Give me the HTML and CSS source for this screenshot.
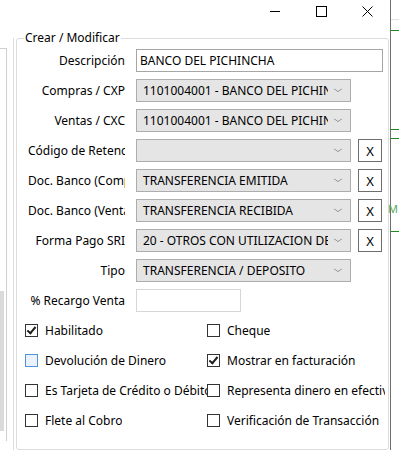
FILE: index.html
```html
<!DOCTYPE html>
<html lang="es">
<head>
    <meta charset="UTF-8">
    <meta name="viewport" content="width=device-width, initial-scale=1.0">
    <title>Crear / Modificar</title>
    <link rel="stylesheet" href="styles.css">
</head>
<body>
    <div class="screen">
        <div class="win">
            <div class="titlebar">
                <span class="tb-btn">
                    <svg width="10" height="10" viewBox="0 0 10 10"><path d="M0 5.5H10" stroke="#000" stroke-width="1"/></svg>
                </span>
                <span class="tb-btn">
                    <svg width="11" height="11" viewBox="0 0 11 11"><rect x="0.5" y="0.5" width="10" height="10" fill="none" stroke="#000" stroke-width="1"/></svg>
                </span>
                <span class="tb-btn">
                    <svg width="11" height="11" viewBox="0 0 11 11"><path d="M0.5 0.5L10.5 10.5M10.5 0.5L0.5 10.5" stroke="#000" stroke-width="1"/></svg>
                </span>
            </div>

            <div class="body">
                <div class="side">
                    <div class="side-box">
                        <div class="side-scroll"></div>
                    </div>
                </div>

                <fieldset class="group">
                    <legend>Crear / Modificar</legend>

                    <!-- campos -->
                    <div class="form">
                        <div class="row">
                            <label class="lbl">Descripción</label>
                            <div class="textbox wide">BANCO DEL PICHINCHA</div>
                        </div>
                        <div class="row">
                            <label class="lbl">Compras / CXP</label>
                            <div class="combo"><span class="combo-text">1101004001 - BANCO DEL PICHINCHA</span><span class="chev"></span></div>
                        </div>
                        <div class="row">
                            <label class="lbl">Ventas / CXC</label>
                            <div class="combo"><span class="combo-text">1101004001 - BANCO DEL PICHINCHA</span><span class="chev"></span></div>
                        </div>
                        <div class="row">
                            <label class="lbl">Código de Retención</label>
                            <div class="combo"><span class="combo-text"></span><span class="chev"></span></div>
                            <button class="xbtn">X</button>
                        </div>
                        <div class="row">
                            <label class="lbl">Doc. Banco (Compras)</label>
                            <div class="combo"><span class="combo-text">TRANSFERENCIA EMITIDA</span><span class="chev"></span></div>
                            <button class="xbtn">X</button>
                        </div>
                        <div class="row">
                            <label class="lbl">Doc. Banco (Ventas)</label>
                            <div class="combo"><span class="combo-text">TRANSFERENCIA RECIBIDA</span><span class="chev"></span></div>
                            <button class="xbtn">X</button>
                        </div>
                        <div class="row">
                            <label class="lbl">Forma Pago SRI</label>
                            <div class="combo"><span class="combo-text">20 - OTROS CON UTILIZACION DEL SISTEMA FINANCIERO</span><span class="chev"></span></div>
                            <button class="xbtn">X</button>
                        </div>
                        <div class="row">
                            <label class="lbl">Tipo</label>
                            <div class="combo"><span class="combo-text">TRANSFERENCIA / DEPOSITO</span><span class="chev"></span></div>
                        </div>
                        <div class="row">
                            <label class="lbl">% Recargo Venta</label>
                            <div class="textbox short"></div>
                        </div>
                    </div>

                    <!-- opciones -->
                    <div class="checks">
                        <div class="check"><span class="box on"></span><span class="ctext">Habilitado</span></div>
                        <div class="check"><span class="box"></span><span class="ctext">Cheque</span></div>
                        <div class="check"><span class="box hover"></span><span class="ctext">Devolución de Dinero</span></div>
                        <div class="check"><span class="box on"></span><span class="ctext">Mostrar en facturación</span></div>
                        <div class="check"><span class="box"></span><span class="ctext">Es Tarjeta de Crédito o Débito</span></div>
                        <div class="check"><span class="box"></span><span class="ctext">Representa dinero en efectivo</span></div>
                        <div class="check"><span class="box"></span><span class="ctext">Flete al Cobro</span></div>
                        <div class="check"><span class="box"></span><span class="ctext">Verificación de Transacción</span></div>
                    </div>
                </fieldset>
            </div>
        </div>

        <div class="behind">
            <div class="bh-gap" style="height: 19px"></div>
            <div class="bh-line gray"></div>
            <div class="bh-gap" style="height: 10px"></div>
            <div class="bh-line green"></div>
            <div class="bh-gap" style="height: 98px"></div>
            <div class="bh-line green"></div>
            <div class="bh-gap" style="height: 8px"></div>
            <div class="bh-line green"></div>
            <div class="bh-gap" style="height: 63px"></div>
            <div class="bh-text">M</div>
            <div class="bh-gap" style="height: 16px"></div>
            <div class="bh-line green"></div>
        </div>
    </div>
</body>
</html>
```

FILE: styles.css
```css
body {
    margin: 0;
    padding: 0;
    background-color: #ffffff;
    font-family: 'Noto Sans', 'Open Sans', sans-serif;
    font-size: 12px;
    color: #000;
}
.screen {
    display: flex;
    width: 399px;
    height: 450px;
    overflow: hidden;
}
.win {
    width: 390px;
    height: 450px;
    border-right: 1px solid #6f6f6f;
    display: flex;
    flex-direction: column;
    flex: none;
}
.titlebar {
    height: 22px;
    display: flex;
    justify-content: flex-end;
    margin-bottom: 8px;
}
.tb-btn {
    width: 46px;
    height: 22px;
    display: flex;
    align-items: center;
    justify-content: center;
}
.body {
    display: flex;
    flex: 1;
}
.side {
    width: 13px;
    margin-top: 8px;
    border-right: 1px solid #dedede;
    flex: none;
}
.side-box {
    width: 6px;
    height: 392px;
    margin-top: 10px;
    border-top: 1px solid #cfcfcf;
    border-right: 1px solid #cfcfcf;
    display: flex;
    flex-direction: column;
    justify-content: flex-end;
}
.side-scroll {
    width: 4px;
    height: 140px;
    margin-bottom: 10px;
    background-color: #dadada;
}
.group {
    margin: 0 1px 0 2px;
    padding: 0;
    border: 1px solid #dcdcdc;
    border-radius: 3px;
    flex: 1;
    min-width: 0;
}
.group legend {
    margin-left: 7px;
    padding: 0 1px;
    line-height: 16px;
}
.form {
    display: flex;
    flex-direction: column;
    gap: 7px;
    padding: 3px 0 0 11px;
}
.row {
    display: flex;
    align-items: center;
    height: 23px;
}
.lbl {
    width: 97px;
    margin-right: 11px;
    text-align: right;
    white-space: nowrap;
    overflow: hidden;
    flex: none;
}
.textbox {
    height: 21px;
    border: 1px solid #a6a6a6;
    background-color: #fff;
    padding-left: 3px;
    line-height: 21px;
    box-sizing: content-box;
    white-space: nowrap;
}
.textbox.wide {
    width: 242px;
}
.textbox.short {
    width: 100px;
    border-color: #d6d6d6;
}
.combo {
    width: 213px;
    height: 21px;
    border: 1px solid #adadad;
    background-color: #e5e5e5;
    display: flex;
    align-items: center;
    flex: none;
}
.combo-text {
    flex: 1;
    padding-left: 6px;
    white-space: nowrap;
    overflow: hidden;
}
.chev {
    width: 7px;
    height: 7px;
    margin: 0 8px 4px 6px;
    border-right: 1px solid #6a6a6a;
    border-bottom: 1px solid #6a6a6a;
    transform: scale(0.75, 0.5) rotate(45deg);
    flex: none;
}
.xbtn {
    width: 24px;
    height: 23px;
    margin-left: 7px;
    padding: 0;
    border: 1px solid #6e6e6e;
    background-color: #fff;
    font-family: 'Noto Sans', sans-serif;
    font-size: 13px;
    color: #000;
    flex: none;
}
.checks {
    display: grid;
    grid-template-columns: 182px 178px;
    grid-auto-rows: 30px;
    padding: 3px 0 0 8px;
}
.check {
    display: flex;
    align-items: center;
    overflow: hidden;
    white-space: nowrap;
}
.box {
    width: 11px;
    height: 11px;
    border: 1px solid #333;
    background-color: #fff;
    margin-right: 7px;
    flex: none;
    position: relative;
}
.box.hover {
    border-color: #4f93d8;
    background-color: #eaf3fd;
}
.box.on::after {
    content: "";
    position: absolute;
    left: 3px;
    top: 0px;
    width: 3px;
    height: 7px;
    border-right: 2px solid #1e1e1e;
    border-bottom: 2px solid #1e1e1e;
    transform: rotate(40deg);
}
.ctext {
    overflow: hidden;
}
.behind {
    width: 8px;
    flex: none;
    display: flex;
    flex-direction: column;
}
.bh-line {
    height: 1px;
    flex: none;
}
.bh-line.gray {
    background-color: #e2e2e2;
}
.bh-line.green {
    background-color: #1d8c1d;
}
.bh-text {
    font-size: 11px;
    line-height: 13px;
    color: #5aa85a;
    margin-left: -3px;
}
```
